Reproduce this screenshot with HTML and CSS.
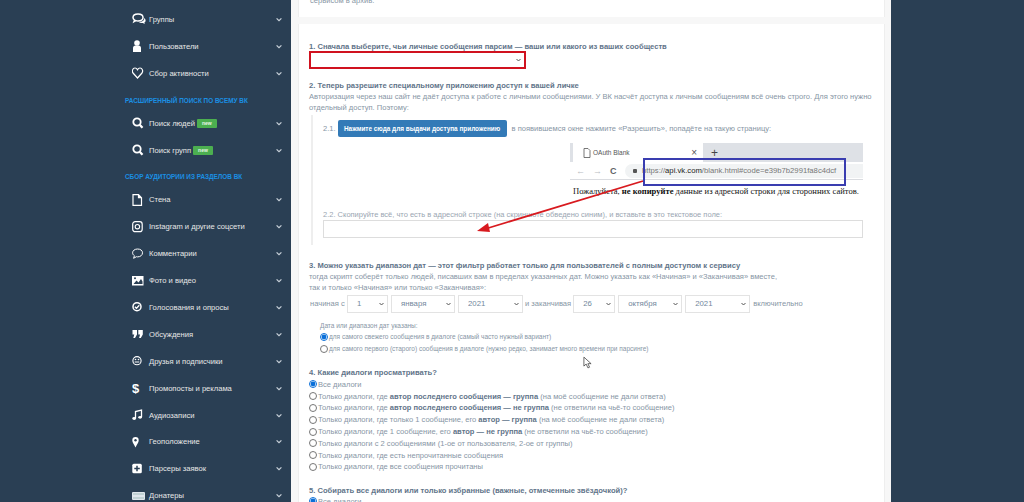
FILE: index.html
```html
<!DOCTYPE html>
<html lang="ru">
<head>
<meta charset="utf-8">
<title>Парсер личных сообщений</title>
<link rel="stylesheet" href="styles.css">
</head>
<body>
<svg class="defs" width="0" height="0" aria-hidden="true">
  <symbol id="chev" viewBox="0 0 10 7"><path d="M1 1.500 5 5.500 9 1.500" fill="none" stroke="currentColor" stroke-width="2"/></symbol>
</svg>
<div class="page">
  <nav class="sidebar">
    <a class="item"><svg class="ic" viewBox="0 0 14 12"><path d="M6 1C3 1 1 2.500 1 4.500c0 1 .6 2 1.600 2.600L2 8.600l2-1c.6.2 1.300.3 2 .3 3 0 5-1.500 5-3.400S9 1 6 1z" fill="none" stroke="#fff" stroke-width="1.500"/><path d="M12 5c1 .6 1.600 1.400 1.600 2.400 0 .9-.5 1.600-1.300 2.100l.5 1.400-2-1c-1.500.3-3 0-4-.8 3 0 6-1.600 5.200-4.100z" fill="#fff"/></svg><span class="lbl">Группы</span><svg class="chev"><use href="#chev"/></svg></a>
    <a class="item"><svg class="ic" viewBox="0 0 14 12"><circle cx="5" cy="3" r="2.800" fill="#fff"/><path d="M1 12V8c0-1.500 1-2.500 2.500-2.500h3C8 5.500 9 6.500 9 8v4z" fill="#fff"/></svg><span class="lbl">Пользователи</span><svg class="chev"><use href="#chev"/></svg></a>
    <a class="item"><svg class="ic" viewBox="0 0 14 12"><path d="M5.500 11 1 6C-.3 4.200.5 1 3 1c1.100 0 1.900.7 2.500 1.800C6.100 1.700 6.900 1 8 1c2.500 0 3.300 3.200 2 5z" fill="none" stroke="#fff" stroke-width="1.200"/></svg><span class="lbl">Сбор активности</span><svg class="chev"><use href="#chev"/></svg></a>
    <div class="sect">Расширенный поиск по всему ВК</div>
    <a class="item"><svg class="ic" viewBox="0 0 14 12"><circle cx="5" cy="5" r="3.700" fill="none" stroke="#fff" stroke-width="1.800"/><path d="M7.700 7.700 10.500 10.800" stroke="#fff" stroke-width="2.200"/></svg><span class="lbl">Поиск людей</span><span class="new">new</span><svg class="chev"><use href="#chev"/></svg></a>
    <a class="item"><svg class="ic" viewBox="0 0 14 12"><circle cx="5" cy="5" r="3.700" fill="none" stroke="#fff" stroke-width="1.800"/><path d="M7.700 7.700 10.500 10.800" stroke="#fff" stroke-width="2.200"/></svg><span class="lbl">Поиск групп</span><span class="new">new</span><svg class="chev"><use href="#chev"/></svg></a>
    <div class="sect">Сбор аудитории из разделов ВК</div>
    <a class="item"><svg class="ic" viewBox="0 0 14 12"><path d="M1 .7h5.500l3 3v7.600H1zM6.500 .7v3h3" fill="none" stroke="#fff" stroke-width="1.200"/></svg><span class="lbl">Стена</span><svg class="chev"><use href="#chev"/></svg></a>
    <a class="item"><svg class="ic" viewBox="0 0 14 12"><rect x=".7" y=".7" width="9.500" height="10" rx="2.500" fill="none" stroke="#fff" stroke-width="1.200"/><circle cx="5.400" cy="5.700" r="2.200" fill="none" stroke="#fff" stroke-width="1.100"/></svg><span class="lbl">Instagram и другие соцсети</span><svg class="chev"><use href="#chev"/></svg></a>
    <a class="item"><svg class="ic" viewBox="0 0 14 12"><path d="M5.500 1C2.800 1 .6 2.600.6 4.800c0 1.200.7 2.200 1.800 2.900L1.600 10.300l2.800-1.600c.4.100.7.200 1.100.2 3 0 5-1.800 5-4.100S8.500 1 5.500 1z" fill="none" stroke="#fff" stroke-width="1"/></svg><span class="lbl">Комментарии</span><svg class="chev"><use href="#chev"/></svg></a>
    <a class="item"><svg class="ic" viewBox="0 0 14 12"><rect x="0" y="1" width="11.500" height="9.500" fill="#fff"/><path d="M1.500 9 4.500 5.500 6.500 7.500 9 4 10.500 6.500V9z" fill="#2a3f54"/><circle cx="3" cy="3.200" r="1" fill="#2a3f54"/></svg><span class="lbl">Фото и видео</span><svg class="chev"><use href="#chev"/></svg></a>
    <a class="item"><svg class="ic" viewBox="0 0 14 12"><circle cx="5" cy="5.700" r="4" fill="none" stroke="#fff" stroke-width="1.500"/><path d="M2.900 5.700 4.500 7.300 7.300 4.300" fill="none" stroke="#fff" stroke-width="1.300"/></svg><span class="lbl">Голосования и опросы</span><svg class="chev"><use href="#chev"/></svg></a>
    <a class="item"><svg class="ic" viewBox="0 0 14 12"><path d="M.5 2h4.500v4.500L3 10H1.300l1-3.500H.5zM6.300 2h4.500v4.500L8.800 10H7.100l1-3.500H6.300z" fill="#fff"/></svg><span class="lbl">Обсуждения</span><svg class="chev"><use href="#chev"/></svg></a>
    <a class="item"><svg class="ic" viewBox="0 0 14 12"><circle cx="5" cy="5.700" r="4.100" fill="none" stroke="#fff" stroke-width="1.100"/><circle cx="3.500" cy="4.500" r=".8" fill="#fff"/><circle cx="6.500" cy="4.500" r=".8" fill="#fff"/><path d="M2.700 7h4.600" stroke="#fff"/></svg><span class="lbl">Друзья и подписчики</span><svg class="chev"><use href="#chev"/></svg></a>
    <a class="item"><svg class="ic" viewBox="0 0 14 12"><text x="0" y="11" class="dollar">$</text></svg><span class="lbl">Промопосты и реклама</span><svg class="chev"><use href="#chev"/></svg></a>
    <a class="item"><svg class="ic" viewBox="0 0 14 12"><path d="M3.500 9V2.500L9.500 1v7" fill="none" stroke="#fff" stroke-width="1.300"/><ellipse cx="2.200" cy="9.500" rx="1.900" ry="1.400" fill="#fff"/><ellipse cx="8.100" cy="8.300" rx="1.900" ry="1.400" fill="#fff"/></svg><span class="lbl">Аудиозаписи</span><svg class="chev"><use href="#chev"/></svg></a>
    <a class="item"><svg class="ic" viewBox="0 0 14 12"><path d="M3.500 11.500C2 8.500.3 6.500.3 4.300a3.200 3.200 0 0 1 6.400 0c0 2.200-1.700 4.200-3.200 7.200z" fill="#fff"/><circle cx="3.500" cy="4.200" r="1.200" fill="#2a3f54"/></svg><span class="lbl">Геоположение</span><svg class="chev"><use href="#chev"/></svg></a>
    <a class="item"><svg class="ic" viewBox="0 0 14 12"><rect x=".3" y=".8" width="9.500" height="9.500" rx="1.500" fill="#fff"/><path d="M5 2.800v5.500M2.300 5.500h5.500" stroke="#2a3f54" stroke-width="1.500"/></svg><span class="lbl">Парсеры заявок</span><svg class="chev"><use href="#chev"/></svg></a>
    <a class="item"><svg class="ic" viewBox="0 0 14 12"><rect x="0" y="2" width="13" height="8" rx="1" fill="#dfe6ec"/><path d="M1 4h11M1 8h11" stroke="#8aa" stroke-width=".7"/></svg><span class="lbl">Донатеры</span><svg class="chev"><use href="#chev"/></svg></a>
  </nav>

  <main class="main">
    <section class="card card-top">
      <p class="cut">сервисом в архив.</p>
    </section>
    <section class="card card-form">
      <h4 class="q">1. Сначала выберите, чьи личные сообщения парсим — ваши или какого из ваших сообществ</h4>
      <select class="owner"><option></option></select>

      <h4 class="q q2">2. Теперь разрешите специальному приложению доступ к вашей личке</h4>
      <p class="txt">Авторизация через наш сайт не даёт доступа к работе с личными сообщениями. У ВК насчёт доступа к личным сообщениям всё очень строго. Для этого нужно<br>отдельный доступ. Поэтому:</p>

      <div class="steps">
        <div class="step1">
          <span>2.1.</span>
          <button class="btn" type="button">Нажмите сюда для выдачи доступа приложению</button>
          <span class="after">в появившемся окне нажмите «Разрешить», попадёте на такую страницу:</span>
        </div>
        <div class="shot">
          <div class="tabs">
            <div class="tab"><svg class="doc" viewBox="0 0 8 10"><path d="M1 .5h4l2 2v7H1z" fill="none" stroke="#555" stroke-width=".8"/></svg><span>OAuth Blank</span><span class="x">×</span></div>
            <span class="plus">+</span>
          </div>
          <div class="addr">
            <span class="nav">←</span><span class="nav">→</span><span class="nav dark">C</span>
            <div class="url"><span class="lock"></span><span>https://<b>api.vk.com</b>/blank.html#code=e39b7b2991fa8c4dcf</span></div>
          </div>
          <p class="warn">Пожалуйста, <b>не копируйте</b> данные из адресной строки для сторонних сайтов.</p>
        </div>
        <div class="step2">2.2. Скопируйте всё, что есть в адресной строке (на скриншоте обведено синим), и вставьте в это текстовое поле:</div>
        <input class="code" type="text">
      </div>

      <h4 class="q q3">3. Можно указать диапазон дат — этот фильтр работает только для пользователей с полным доступом к сервису</h4>
      <p class="txt">тогда скрипт соберёт только людей, писавших вам в пределах указанных дат. Можно указать как «Начиная» и «Заканчивая» вместе,<br>так и только «Начиная» или только «Заканчивая»:</p>
      <div class="dates">
        <span class="from">начиная с</span>
        <select class="sel s-d"><option>1</option></select>
        <select class="sel s-m"><option>января</option></select>
        <select class="sel s-y"><option>2021</option></select>
        <span class="till">и заканчивая</span>
        <select class="sel s-d2"><option>26</option></select>
        <select class="sel s-m"><option>октября</option></select>
        <select class="sel s-y"><option>2021</option></select>
        <span>включительно</span>
      </div>
      <div class="dateopts">
        <div class="dt">Дата или диапазон дат указаны:</div>
        <label class="opt"><input type="radio" name="d" checked>для самого свежего сообщения в диалоге (самый часто нужный вариант)</label>
        <label class="opt"><input type="radio" name="d">для самого первого (старого) сообщения в диалоге (нужно редко, занимает много времени при парсинге)</label>
      </div>

      <h4 class="q q4">4. Какие диалоги просматривать?</h4>
      <div class="list">
        <label class="opt"><input type="radio" name="f" checked>Все диалоги</label>
        <label class="opt"><input type="radio" name="f">Только диалоги, где&nbsp;<b>автор последнего сообщения — группа</b>&nbsp;(на моё сообщение не дали ответа)</label>
        <label class="opt"><input type="radio" name="f">Только диалоги, где&nbsp;<b>автор последнего сообщения — не группа</b>&nbsp;(не ответили на чьё-то сообщение)</label>
        <label class="opt"><input type="radio" name="f">Только диалоги, где только 1 сообщение, его&nbsp;<b>автор — группа</b>&nbsp;(на моё сообщение не дали ответа)</label>
        <label class="opt"><input type="radio" name="f">Только диалоги, где 1 сообщение, его&nbsp;<b>автор — не группа</b>&nbsp;(не ответили на чьё-то сообщение)</label>
        <label class="opt"><input type="radio" name="f">Только диалоги с 2 сообщениями (1-ое от пользователя, 2-ое от группы)</label>
        <label class="opt"><input type="radio" name="f">Только диалоги, где есть непрочитанные сообщения</label>
        <label class="opt"><input type="radio" name="f">Только диалоги, где все сообщения прочитаны</label>
      </div>

      <h4 class="q q5">5. Собирать все диалоги или только избранные (важные, отмеченные звёздочкой)?</h4>
      <label class="opt"><input type="radio" name="s" checked>Все диалоги</label>
    </section>

    <svg class="arrow" viewBox="0 0 180 60" aria-hidden="true">
      <path d="M168 5 10 53" stroke="#d81a1f" stroke-width="1.800" fill="none"/>
      <path d="M2 55 13 47 15 56z" fill="#d81a1f"/>
    </svg>
    <div class="box-red"></div>
    <div class="box-blue"></div>
    <svg class="cursor" viewBox="0 0 10 14" aria-hidden="true"><path d="M1 1v10l2.500-2.300L5.500 13l1.800-.8L5.400 8.300H9z" fill="#fff" stroke="#333" stroke-width=".8"/></svg>
  </main>
  <aside class="rail"></aside>
</div>
</body>
</html>
```

FILE: styles.css
```css
* { box-sizing: border-box; }
html, body { margin: 0; height: 502px; overflow: hidden; }
body { font-family: "Liberation Sans", Arial, sans-serif; color: #73879c; background: #2a3f54; }
.defs { position: absolute; }
.page { display: flex; height: 502px; overflow: hidden; }

.sidebar { width: 291px; flex: none; background: #2a3f54; padding: 6px 0 0 125px; color: #e7e7e7; }
.item { display: flex; align-items: center; height: 26.900px; padding-left: 7px; font-size: 7.600px; }
.ic { width: 14px; height: 12px; flex: none; margin-right: 3px; }
.dollar { fill: #fff; font: bold 13px "Liberation Sans", sans-serif; }
.lbl { white-space: nowrap; }
.chev { width: 6px; height: 5px; margin-left: auto; margin-right: 9px; color: #c9d2da; flex: none; }
.new { background: #4caf50; color: #e8f5e9; font-size: 5px; font-weight: bold; line-height: 9px; padding: 0 5px; margin-left: 2px; border-radius: 1px; }
.sect { height: 23px; padding-top: 10px; font-size: 6.400px; line-height: 8px; font-weight: bold; color: #1a8fe3; text-transform: uppercase; white-space: nowrap; }

.main { position: relative; width: 600px; flex: none; background: #f7f7f7; padding: 0 6px 0 7px; }
.rail { flex: 1; background: #2a3f54; }
.card { background: #fff; border: 1px solid #eeeeee; border-width: 0 1px; }
.card-top { height: 17px; overflow: hidden; margin-bottom: 7px; }
.cut { margin: -5px 0 0 11px; font-size: 7.550px; line-height: 11px; color: #8796a5; }
.card-form { padding: 16.500px 11px 0 10px; height: 490px; }

.q { margin: 0; font-size: 7.600px; line-height: 11px; font-weight: bold; color: #5f7489; white-space: nowrap; }
.txt { margin: 0; font-size: 7.550px; line-height: 11px; color: #8796a5; white-space: nowrap; }
.owner { display: block; width: 216px; height: 17px; margin: -.5px 0 13px; padding: 0 4px; border: 1px solid #ddd; border-radius: 0; background: #fff; font-size: 7.500px; appearance: none; background-image: url("data:image/svg+xml,%3Csvg xmlns='http://www.w3.org/2000/svg' viewBox='0 0 10 7'%3E%3Cpath d='M1 1.500 5 5.500 9 1.500' fill='none' stroke='%23555' stroke-width='2'/%3E%3C/svg%3E"); background-repeat: no-repeat; background-size: 5px 4px; background-position: right 3px center; }
.q2 { line-height: 10px; }

.steps { margin: 2px 0 0 2px; padding: 5px 0 7px 10px; border-left: 2px solid #eeeeee; width: 552px; }
.step1 { display: flex; align-items: center; gap: 2px; font-size: 7.550px; color: #8796a5; height: 17px; white-space: nowrap; }
.after { margin-left: 3px; }
.btn { width: 169px; height: 17px; flex: none; border: 0; padding: 0; background: #337ab7; color: #fff; border-radius: 2px; font: bold 6.400px "Liberation Sans", sans-serif; white-space: nowrap; }

.shot { width: 293px; height: 54px; margin: 6px 0 0 247px; background: #fff; }
.tabs { height: 19px; background: #dee1e6; display: flex; align-items: center; }
.tab { width: 133px; height: 19px; background: #fff; display: flex; align-items: center; padding-left: 10px; font-size: 6.500px; color: #555; border-left: 3px solid #dee1e6; flex: none; }
.doc { width: 8px; height: 10px; margin-right: 2px; flex: none; }
.x { margin-left: auto; margin-right: 6px; font-size: 10px; color: #555; }
.plus { margin-left: 8px; font-size: 12px; color: #444; }
.addr { height: 18px; display: flex; align-items: center; gap: 9px; padding-left: 6px; border-bottom: 1px solid #dadce0; }
.nav { font-size: 9px; color: #b9bdc2; width: 8px; flex: none; }
.nav.dark { color: #5f6368; font-weight: bold; margin-right: -2px; }
.url { display: flex; align-items: center; flex: 1; height: 14px; background: #f1f3f4; border-radius: 7px 0 0 7px; padding-left: 8px; font-size: 7.700px; color: #777; white-space: nowrap; }
.url b { font-weight: normal; color: #222; }
.lock { width: 4px; height: 4px; background: #555; margin-right: 5px; border-radius: 1px; flex: none; }
.warn { margin: 5.500px 0 0 3px; font: 8.550px/11px "Liberation Serif", serif; color: #111; white-space: nowrap; }

.step2 { font-size: 7.500px; line-height: 11px; color: #9aa6b2; margin-top: 12px; white-space: nowrap; }
.code { display: block; width: 540px; height: 18px; margin-top: 0; border: 1px solid #ddd; background: #fff; }

.q3 { margin-top: 14.500px; }
.dates { display: flex; align-items: center; gap: 3px; margin-top: 2px; height: 18px; font-size: 7.550px; color: #8796a5; white-space: nowrap; }
.from { width: 34px; margin-left: 1px; flex: none; }
.till { margin: 0 -1px; }
.sel { height: 18px; flex: none; border: 1px solid #e3e3e3; border-radius: 0; background: #fff; color: #73879c; font: 7.800px "Liberation Sans", sans-serif; padding: 0 9px; appearance: none; background-image: url("data:image/svg+xml,%3Csvg xmlns='http://www.w3.org/2000/svg' viewBox='0 0 10 7'%3E%3Cpath d='M1 1.500 5 5.500 9 1.500' fill='none' stroke='%23555' stroke-width='2'/%3E%3C/svg%3E"); background-repeat: no-repeat; background-size: 5px 4px; background-position: right 3px center; }
.s-d { width: 41px; }
.s-m { width: 64px; }
.s-y { width: 65px; }
.s-d2 { width: 42px; }

.dateopts { margin: 7px 0 0 11px; font-size: 6.500px; color: #8796a5; }
.dt { line-height: 11px; }
.dateopts .opt { height: 12px; }
.opt { display: flex; align-items: center; height: 11.800px; white-space: nowrap; }
.opt input { width: 8px; height: 8px; margin: 0 1px 0 0; accent-color: #0a6fd8; flex: none; }
.opt b { color: #5f7489; }
.q4 { margin-top: 12.500px; }
.list { margin-top: 0.500px; font-size: 7.550px; color: #8796a5; }
.q5 { margin-top: 11.700px; }
.card-form > .opt { font-size: 7.550px; color: #8796a5; }

.box-red { position: absolute; left: 18px; top: 51px; width: 217px; height: 18px; border: 2px solid #d0121f; }
.box-blue { position: absolute; left: 352px; top: 158px; width: 203px; height: 28px; border: 2px solid #3a3db0; }
.arrow { position: absolute; left: 184px; top: 176px; width: 180px; height: 60px; }
.cursor { position: absolute; left: 292px; top: 356px; width: 9px; height: 13px; }
```
